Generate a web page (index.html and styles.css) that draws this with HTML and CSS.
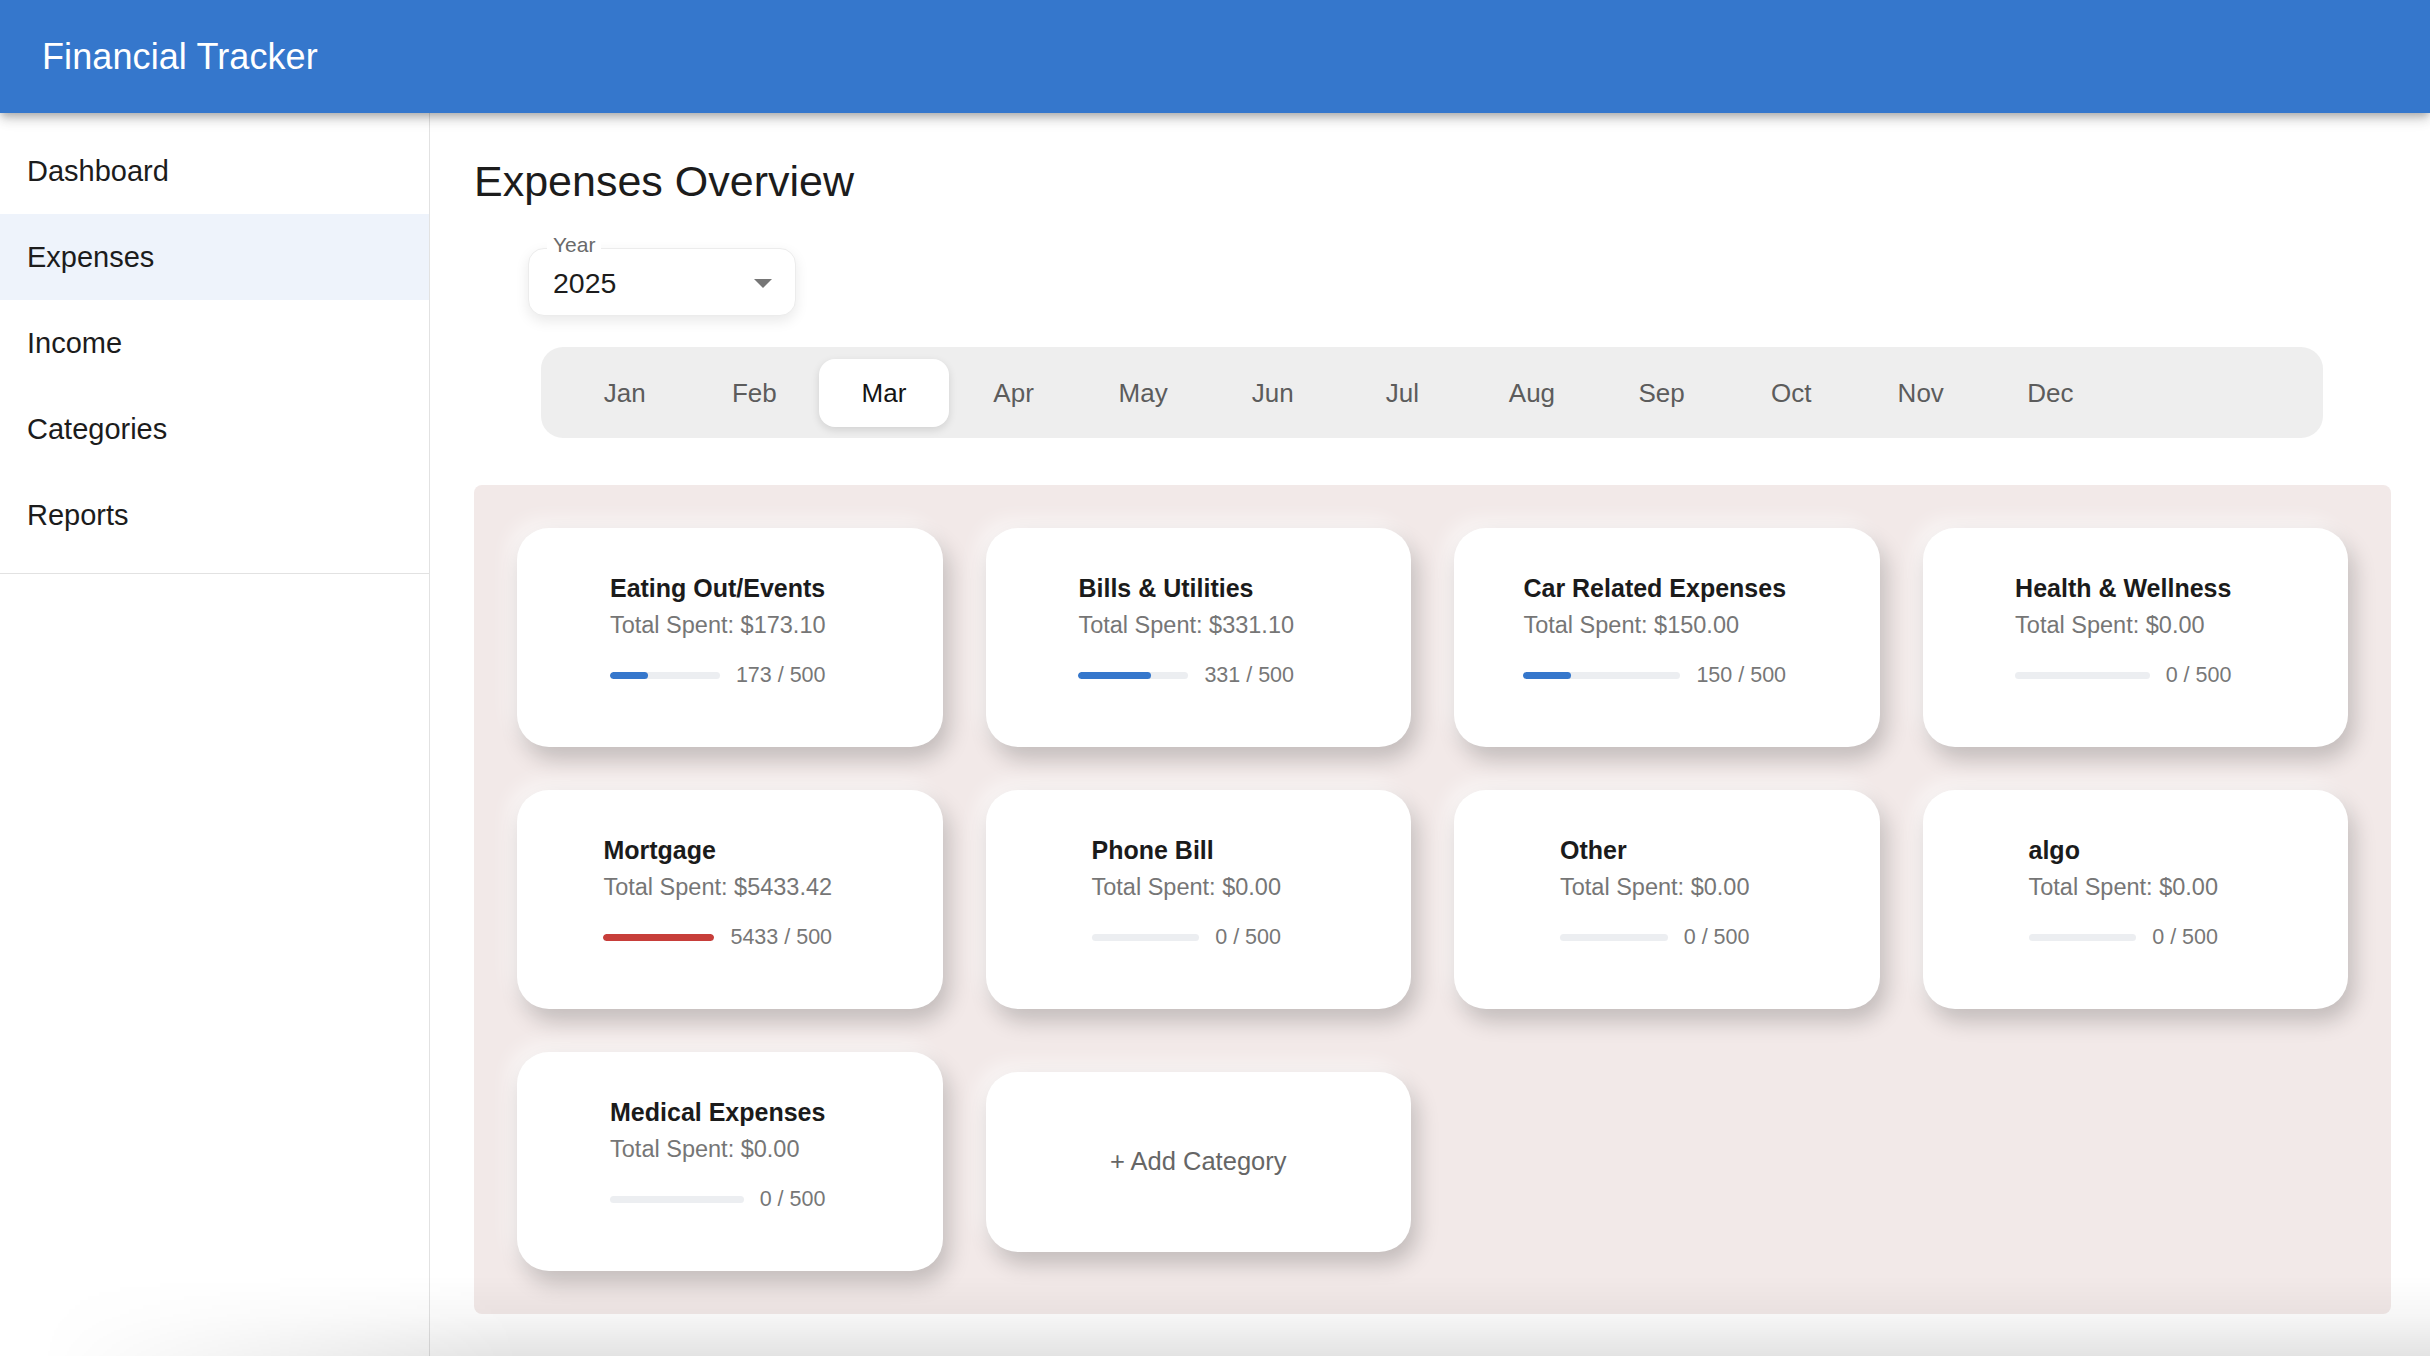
FILE: index.html
```html
<!DOCTYPE html>
<html lang="en">
<head>
<meta charset="utf-8">
<title>Financial Tracker</title>
<link rel="stylesheet" href="styles.css">
</head>
<body>
<header class="appbar">
  <div class="appbar-title">Financial Tracker</div>
</header>
<div class="layout">
  <aside class="sidebar">
    <ul class="nav">
      <li class="nav-item">Dashboard</li>
      <li class="nav-item nav-item-active">Expenses</li>
      <li class="nav-item">Income</li>
      <li class="nav-item">Categories</li>
      <li class="nav-item">Reports</li>
    </ul>
  </aside>
  <main class="main">
    <h1 class="page-title">Expenses Overview</h1>
    <div class="year-select">
      <span class="year-label">Year</span>
      <span class="year-value">2025</span>
      <svg class="year-arrow" viewBox="7 10 10 5" width="18" height="9"><path d="M7 10l5 5 5-5z" fill="#767676"/></svg>
    </div>
    <div class="months">
      <div class="month">Jan</div>
      <div class="month">Feb</div>
      <div class="month month-active">Mar</div>
      <div class="month">Apr</div>
      <div class="month">May</div>
      <div class="month">Jun</div>
      <div class="month">Jul</div>
      <div class="month">Aug</div>
      <div class="month">Sep</div>
      <div class="month">Oct</div>
      <div class="month">Nov</div>
      <div class="month">Dec</div>
    </div>
    <section class="cards">
      <div class="card">
        <div class="card-body">
          <div class="card-title">Eating Out/Events</div>
          <div class="card-sub">Total Spent: $173.10</div>
          <div class="card-progress"><div class="bar"><div class="fill" style="width:34.6%"></div></div><span class="ratio">173 / 500</span></div>
        </div>
      </div>
      <div class="card">
        <div class="card-body">
          <div class="card-title">Bills &amp; Utilities</div>
          <div class="card-sub">Total Spent: $331.10</div>
          <div class="card-progress"><div class="bar"><div class="fill" style="width:66.2%"></div></div><span class="ratio">331 / 500</span></div>
        </div>
      </div>
      <div class="card">
        <div class="card-body">
          <div class="card-title">Car Related Expenses</div>
          <div class="card-sub">Total Spent: $150.00</div>
          <div class="card-progress"><div class="bar"><div class="fill" style="width:30%"></div></div><span class="ratio">150 / 500</span></div>
        </div>
      </div>
      <div class="card">
        <div class="card-body">
          <div class="card-title">Health &amp; Wellness</div>
          <div class="card-sub">Total Spent: $0.00</div>
          <div class="card-progress"><div class="bar"><div class="fill" style="width:0%"></div></div><span class="ratio">0 / 500</span></div>
        </div>
      </div>
      <div class="card">
        <div class="card-body">
          <div class="card-title">Mortgage</div>
          <div class="card-sub">Total Spent: $5433.42</div>
          <div class="card-progress"><div class="bar"><div class="fill fill-over" style="width:100%"></div></div><span class="ratio">5433 / 500</span></div>
        </div>
      </div>
      <div class="card">
        <div class="card-body">
          <div class="card-title">Phone Bill</div>
          <div class="card-sub">Total Spent: $0.00</div>
          <div class="card-progress"><div class="bar"><div class="fill" style="width:0%"></div></div><span class="ratio">0 / 500</span></div>
        </div>
      </div>
      <div class="card">
        <div class="card-body">
          <div class="card-title">Other</div>
          <div class="card-sub">Total Spent: $0.00</div>
          <div class="card-progress"><div class="bar"><div class="fill" style="width:0%"></div></div><span class="ratio">0 / 500</span></div>
        </div>
      </div>
      <div class="card">
        <div class="card-body">
          <div class="card-title">algo</div>
          <div class="card-sub">Total Spent: $0.00</div>
          <div class="card-progress"><div class="bar"><div class="fill" style="width:0%"></div></div><span class="ratio">0 / 500</span></div>
        </div>
      </div>
      <div class="card">
        <div class="card-body">
          <div class="card-title">Medical Expenses</div>
          <div class="card-sub">Total Spent: $0.00</div>
          <div class="card-progress"><div class="bar"><div class="fill" style="width:0%"></div></div><span class="ratio">0 / 500</span></div>
        </div>
      </div>
      <div class="card card-add">+ Add Category</div>
    </section>
  </main>
</div>
<div class="bottom-shade"></div>
</body>
</html>
```
FILE: styles.css
```css
html, body {
  margin: 0;
  padding: 0;
  height: 100%;
}
body {
  font-family: "Liberation Sans", Arial, sans-serif;
  background: #ffffff;
  color: #1f1f1f;
  overflow: hidden;
}
.appbar {
  position: relative;
  z-index: 2;
  height: 113px;
  background: #3577cc;
  display: flex;
  align-items: center;
  padding-left: 42px;
  box-shadow: 0 4px 7px -2px rgba(0,0,0,0.2), 0 7px 10px 0 rgba(0,0,0,0.12), 0 2px 18px 0 rgba(0,0,0,0.1);
}
.appbar-title {
  color: #ffffff;
  font-size: 36px;
  font-weight: 400;
  letter-spacing: 0.1px;
}
.layout {
  display: flex;
  height: calc(100vh - 113px);
}
.sidebar {
  width: 429px;
  flex: none;
  border-right: 1px solid #e2e2e2;
  background: #ffffff;
}
.nav {
  list-style: none;
  margin: 0;
  padding: 15px 0 15px;
  border-bottom: 1px solid #e2e2e2;
}
.nav-item {
  height: 86px;
  display: flex;
  align-items: center;
  padding-left: 27px;
  font-size: 29px;
  color: #1c1c1c;
}
.nav-item-active {
  background: #eef3fb;
}
.main {
  flex: 1;
  padding: 40px 39px 0 44px;
  min-width: 0;
}
.page-title {
  margin: 0;
  font-size: 43px;
  font-weight: 400;
  line-height: 57px;
  color: #1c1c1c;
}
.year-select {
  position: relative;
  margin: 38px 0 0 54px;
  width: 268px;
  height: 68px;
  box-sizing: border-box;
  border: 1px solid #ececec;
  border-radius: 16px;
  background: #ffffff;
  box-shadow: 0 5px 14px rgba(0,0,0,0.09);
  display: flex;
  align-items: center;
  padding: 0 23px 0 24px;
}
.year-label {
  position: absolute;
  left: 18px;
  top: -15px;
  padding: 0 6px;
  background: #ffffff;
  font-size: 21px;
  line-height: 22px;
  color: #6a6a6a;
}
.year-value {
  flex: 1;
  font-size: 28.5px;
  color: #1c1c1c;
  padding-top: 2px;
}
.year-arrow {
  margin-top: 2px;
}
.months {
  margin: 31px 0 0 67px;
  width: 1782px;
  height: 91px;
  box-sizing: border-box;
  padding: 12px 19px 11px;
  background: #eeeeee;
  border-radius: 22px;
  display: flex;
}
.month {
  width: 129.6px;
  flex: none;
  height: 68px;
  display: flex;
  align-items: center;
  justify-content: center;
  font-size: 26px;
  color: #5c5c5c;
  border-radius: 16px;
}
.month-active {
  background: #ffffff;
  color: #141414;
  box-shadow: 0 3px 8px rgba(0,0,0,0.12);
}
.cards {
  margin-top: 47px;
  background: #f2e9e8;
  border-radius: 8px;
  padding: 43px;
  display: grid;
  grid-template-columns: repeat(4, 1fr);
  gap: 43px;
  align-items: center;
}
.card {
  height: 219px;
  box-sizing: border-box;
  background: #ffffff;
  border-radius: 32px;
  box-shadow: 6px 12px 22px rgba(0,0,0,0.2), -8px -8px 20px rgba(255,255,255,0.6);
  display: flex;
  justify-content: center;
  align-items: flex-start;
  padding: 42px 24px 0 0;
}
.card-body {
  display: flex;
  flex-direction: column;
}
.card-title {
  font-size: 25px;
  font-weight: 700;
  line-height: 37.5px;
  color: #1b1b1b;
}
.card-sub {
  font-size: 23.5px;
  line-height: 35px;
  color: #767676;
}
.card-progress {
  margin-top: 17px;
  display: flex;
  align-items: center;
  gap: 16px;
}
.bar {
  flex: 1;
  height: 7px;
  border-radius: 4px;
  background: #eceef1;
  overflow: hidden;
}
.fill {
  height: 100%;
  border-radius: 4px;
  background: #3577cc;
}
.fill-over {
  background: #c73e3a;
}
.ratio {
  font-size: 21.5px;
  line-height: 31.5px;
  color: #777777;
  white-space: nowrap;
}
.card-add {
  height: 180px;
  padding: 0;
  align-items: center;
  font-size: 25.5px;
  color: #666666;
}
.bottom-shade {
  position: fixed;
  left: 0;
  right: 0;
  bottom: 0;
  height: 80px;
  pointer-events: none;
  background: linear-gradient(to bottom, rgba(0,0,0,0) 0%, rgba(0,0,0,0.035) 50%, rgba(0,0,0,0.11) 100%);
  -webkit-mask-image: linear-gradient(to right, transparent 40px, #000 520px);
  mask-image: linear-gradient(to right, transparent 40px, #000 520px);
}
```
